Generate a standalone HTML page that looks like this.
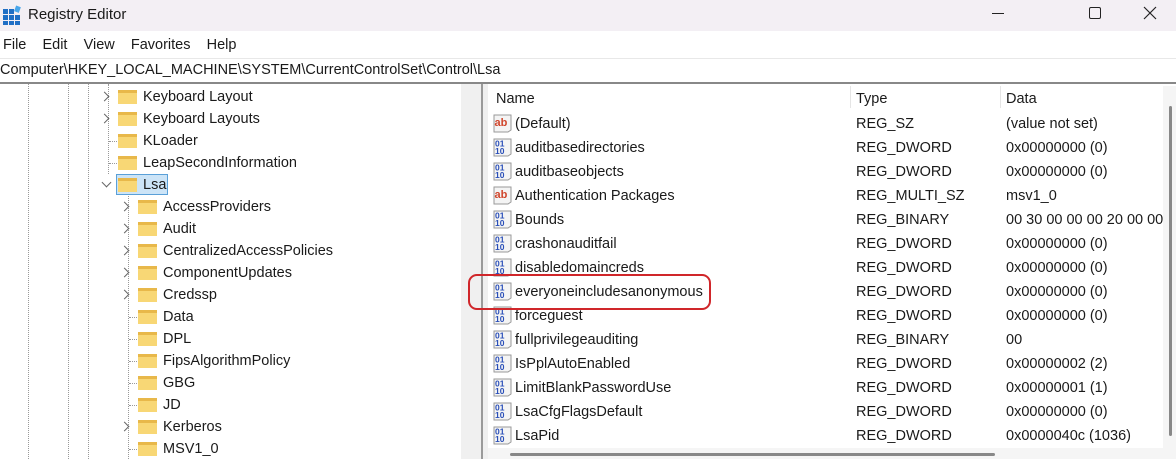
<!DOCTYPE html>
<html><head><style>
*{margin:0;padding:0;box-sizing:border-box}
body{width:1176px;height:459px;overflow:hidden;background:#fff;font-family:"Liberation Sans",sans-serif;font-size:14.5px;color:#1a1a1a;position:relative}
.abs{position:absolute;white-space:nowrap}
#title{left:0;top:0;width:1176px;height:31px;background:#f3eff4}
#menu{left:0;top:31px;width:1176px;height:26px;background:#fff}
#addr{left:0;top:58px;width:1176px;height:24px;background:#fff;border-top:1px solid #e8e8e8}
.t{position:absolute;white-space:nowrap;line-height:22px}
.fold{position:absolute;width:19px;height:14px;background:#f8d775;border-top:3px solid #e8b84a}
.chev{position:absolute;width:7px;height:7px;border-right:1.3px solid #666;border-bottom:1.3px solid #666}
.vd{position:absolute;width:0;border-left:1px dotted #999}
.hd{position:absolute;height:0;width:10px;border-top:1px dotted #999}
.ic{position:absolute;width:19px;height:19px}
</style></head><body>
<div class="abs" id="title"></div>
<svg class="abs" style="left:3px;top:5px" width="18" height="20" viewBox="0 0 18 20"><rect x="0" y="4" width="5" height="5" fill="#1f6fc5"/><rect x="6" y="4" width="5" height="5" fill="#1f6fc5"/><rect x="0" y="10" width="5" height="5" fill="#1f6fc5"/><rect x="6" y="10" width="5" height="5" fill="#1f6fc5"/><rect x="12" y="10" width="5" height="5" fill="#1f6fc5"/><rect x="0" y="16" width="5" height="4" fill="#1f6fc5"/><rect x="6" y="16" width="5" height="4" fill="#1f6fc5"/><rect x="12" y="16" width="5" height="4" fill="#1f6fc5"/><rect x="12" y="1" width="5" height="6" fill="#49a6ea" transform="rotate(20 14 4)"/></svg>
<div class="abs" style="left:28px;top:6px;font-size:15px">Registry Editor</div>
<div class="abs" style="left:992px;top:13px;width:12px;border-top:1px solid #222"></div>
<div class="abs" style="left:1089px;top:7px;width:12px;height:12px;border:1.3px solid #222;border-radius:2px"></div>
<svg class="abs" style="left:1143px;top:6px" width="14" height="14"><path d="M1 1L13 13M13 1L1 13" stroke="#222" stroke-width="1.2"/></svg>
<div class="abs" id="menu"></div>
<div class="abs" style="left:3px;top:37px;font-size:14.5px;word-spacing:0">File&nbsp;&nbsp;&nbsp;&nbsp;Edit&nbsp;&nbsp;&nbsp;&nbsp;View&nbsp;&nbsp;&nbsp;&nbsp;Favorites&nbsp;&nbsp;&nbsp;&nbsp;Help</div>
<div class="abs" id="addr"></div>
<div class="abs" style="left:0;top:62px;font-size:14.5px">Computer\HKEY_LOCAL_MACHINE\SYSTEM\CurrentControlSet\Control\Lsa</div>
<div class="abs" style="left:0;top:82px;width:1176px;height:2px;background:#888"></div>
<div class="abs" style="left:461px;top:84px;width:20px;height:375px;background:#f0f0f0"></div>
<div class="abs" style="left:481px;top:84px;width:2px;height:375px;background:#9a9a9a"></div>
<div class="abs" style="left:483px;top:84px;width:5px;height:375px;background:#f0f0f0"></div>
<div class="vd" style="left:28px;top:84px;height:375px"></div>
<div class="vd" style="left:68px;top:84px;height:375px"></div>
<div class="vd" style="left:88px;top:84px;height:375px"></div>
<div class="vd" style="left:108px;top:84px;height:90px"></div>
<div class="vd" style="left:128px;top:194px;height:265px"></div>
<div id="tree"></div>
<div class="abs" style="left:850px;top:86px;height:22px;border-left:1px solid #e5e5e5"></div>
<div class="abs" style="left:1000px;top:86px;height:22px;border-left:1px solid #e5e5e5"></div>
<div class="abs" style="left:496px;top:91px">Name</div>
<div class="abs" style="left:856px;top:91px">Type</div>
<div class="abs" style="left:1006px;top:91px">Data</div>
<div class="abs" style="left:1163px;top:86px;width:13px;height:362px;background:#f5f5f5"></div>
<div class="abs" style="left:1169px;top:106px;width:3px;height:330px;background:#888;border-radius:2px"></div>
<div class="abs" style="left:488px;top:448px;width:688px;height:11px;background:#f5f5f5"></div>
<div class="abs" style="left:510px;top:453px;width:485px;height:3px;background:#888;border-radius:2px"></div>
<div id="rows"></div>
<div class="abs" style="left:468px;top:274px;width:243px;height:36px;border:2px solid #d0262a;border-radius:9px"></div>
<script>
var tree=[[1,"Keyboard Layout",0],[1,"Keyboard Layouts",0],[0,"KLoader",0],[0,"LeapSecondInformation",0],[2,"Lsa",0],
[1,"AccessProviders",1],[1,"Audit",1],[1,"CentralizedAccessPolicies",1],[1,"ComponentUpdates",1],[1,"Credssp",1],[0,"Data",1],[0,"DPL",1],[0,"FipsAlgorithmPolicy",1],[0,"GBG",1],[0,"JD",1],[1,"Kerberos",1],[0,"MSV1_0",1]];
var h="";
tree.forEach(function(r,i){var y=86+22*i,o=r[2]*20;
if(r[0]==1)h+='<div class="chev" style="left:'+(101+o)+'px;top:'+(y+7)+'px;transform:rotate(-45deg)"></div>';
else if(r[0]==2)h+='<div class="chev" style="left:'+(103+o)+'px;top:'+(y+5)+'px;transform:rotate(45deg)"></div>';
else h+='<div class="hd" style="left:'+(109+o)+'px;top:'+(y+11)+'px"></div>';
if(r[0]==2)h+='<div class="abs" style="left:116px;top:'+y+'px;width:52px;height:21px;background:#cce4f7;border:1px solid #5aa0d8"></div>';
h+='<div class="fold" style="left:'+(118+o)+'px;top:'+(y+4)+'px"></div><div class="t" style="left:'+(143+o)+'px;top:'+y+'px">'+r[1]+'</div>';});
document.getElementById("tree").outerHTML=h;
var rows=[["s","(Default)","REG_SZ","(value not set)"],["b","auditbasedirectories","REG_DWORD","0x00000000 (0)"],["b","auditbaseobjects","REG_DWORD","0x00000000 (0)"],["s","Authentication Packages","REG_MULTI_SZ","msv1_0"],["b","Bounds","REG_BINARY","00 30 00 00 00 20 00 00"],["b","crashonauditfail","REG_DWORD","0x00000000 (0)"],["b","disabledomaincreds","REG_DWORD","0x00000000 (0)"],["b","everyoneincludesanonymous","REG_DWORD","0x00000000 (0)"],["b","forceguest","REG_DWORD","0x00000000 (0)"],["b","fullprivilegeauditing","REG_BINARY","00"],["b","IsPplAutoEnabled","REG_DWORD","0x00000002 (2)"],["b","LimitBlankPasswordUse","REG_DWORD","0x00000001 (1)"],["b","LsaCfgFlagsDefault","REG_DWORD","0x00000000 (0)"],["b","LsaPid","REG_DWORD","0x0000040c (1036)"]];
h="";
rows.forEach(function(r,i){var y=112+24*i;
var ic=r[0]=="s"?'<svg class="ic" style="left:493px;top:'+(y+2)+'px" viewBox="0 0 19 19"><path d="M1 1h17v15l-3 2H1z" fill="#f4f4f4" stroke="#999"/><text x="1.5" y="12" font-size="11" font-weight="bold" fill="#d0452b" font-family="Liberation Sans">ab</text></svg>'
:'<svg class="ic" style="left:493px;top:'+(y+2)+'px" viewBox="0 0 19 19"><path d="M1 1h17v15l-3 2H1z" fill="#f4f4f4" stroke="#999"/><text x="2" y="8.5" font-size="8.5" font-weight="bold" fill="#2a4fb8" font-family="Liberation Sans">01</text><text x="2" y="16" font-size="8.5" font-weight="bold" fill="#2a4fb8" font-family="Liberation Sans">10</text></svg>';
h+=ic+'<div class="t" style="left:515px;top:'+(y+1)+'px">'+r[1]+'</div><div class="t" style="left:856px;top:'+(y+1)+'px">'+r[2]+'</div><div class="t" style="left:1006px;top:'+(y+1)+'px;width:157px;overflow:hidden">'+r[3]+'</div>';});
document.getElementById("rows").outerHTML=h;
</script>
</body></html>
